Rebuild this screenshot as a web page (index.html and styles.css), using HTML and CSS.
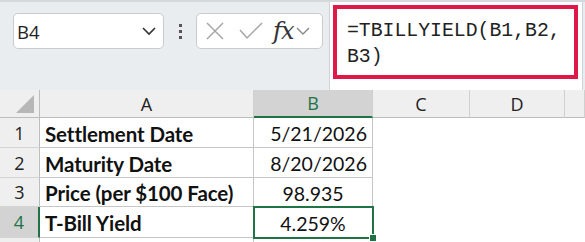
FILE: index.html
```html
<!DOCTYPE html>
<html lang="en">
<head>
  <meta charset="UTF-8" />
  <title>TBILLYIELD</title>
  <link rel="stylesheet" href="styles.css">
</head>
<body>
  <div class="toolbar">
    <div class="name-box">
      <span class="name-text">B4</span>
      <svg class="chev" width="16" height="10" viewBox="0 0 16 10"><path d="M2 2 L8 8 L14 2" fill="none" stroke="#333" stroke-width="1.6"/></svg>
    </div>
    <div class="dots"><span></span><span></span><span></span></div>
    <div class="fx-box">
      <svg width="20" height="20" viewBox="0 0 20 20"><path d="M2 2 L18 18 M18 2 L2 18" stroke="#a6a6a6" stroke-width="1.5" fill="none"/></svg>
      <svg width="26" height="20" viewBox="0 0 26 20"><path d="M2 9 L9 17 L24 2" stroke="#a6a6a6" stroke-width="1.5" fill="none"/></svg>
      <span class="fx">fx</span>
      <svg width="14" height="10" viewBox="0 0 14 10"><path d="M1 2 L7 8 L13 2" fill="none" stroke="#888" stroke-width="1.4"/></svg>
    </div>
    <div class="formula-panel">
      <div class="formula">=TBILLYIELD(B1,B2,<br>B3)</div>
    </div>
  </div>

  <div class="sheet">
    <div class="hdr corner"><span class="tri"></span></div>
    <div class="hdr">A</div>
    <div class="hdr sel">B</div>
    <div class="hdr">C</div>
    <div class="hdr">D</div>
    <div class="hdr"></div>

    <div class="rn">1</div>
    <div class="cell label">Settlement Date</div>
    <div class="cell right">5/21/2026</div>
    <div class="blank"></div><div class="blank"></div><div class="blank"></div>

    <div class="rn">2</div>
    <div class="cell label">Maturity Date</div>
    <div class="cell right">8/20/2026</div>
    <div class="blank"></div><div class="blank"></div><div class="blank"></div>

    <div class="rn">3</div>
    <div class="cell label">Price (per $100 Face)</div>
    <div class="cell center">98.935</div>
    <div class="blank"></div><div class="blank"></div><div class="blank"></div>

    <div class="rn sel">4</div>
    <div class="cell label">T-Bill Yield</div>
    <div class="cell center active">4.259%<span class="handle"></span></div>
    <div class="blank"></div><div class="blank"></div><div class="blank"></div>

    <div class="rn"></div>
    <div class="cell"></div>
    <div class="cell"></div>
    <div class="blank"></div><div class="blank"></div><div class="blank"></div>
  </div>
</body>
</html>
```

FILE: styles.css
```css
* {
  box-sizing: border-box;
}
body {
  margin: 0;
  width: 585px;
  height: 242px;
  overflow: hidden;
  background: #fff;
  font-family: 'Open Sans', sans-serif;
}

/* formula bar */
.toolbar {
  height: 90px;
  display: flex;
  align-items: flex-start;
  background: #e9edf0;
  border-top: 2px solid #d6d9dc;
}
.name-box {
  margin: 11px 0 0 13px;
  width: 151px;
  height: 36px;
  background: #fff;
  border: 1px solid #c9cccf;
  border-radius: 5px;
  display: flex;
  align-items: center;
  justify-content: space-between;
  padding: 0 6px 0 3px;
}
.name-text {
  font-size: 18.5px;
  color: #222;
}
.dots {
  width: 32px;
  height: 36px;
  margin-top: 11px;
  display: flex;
  flex-direction: column;
  align-items: center;
  justify-content: center;
  gap: 3px;
}
.dots span {
  width: 3px;
  height: 3px;
  background: #555;
}
.fx-box {
  margin-top: 11px;
  width: 127px;
  height: 36px;
  background: #fff;
  border: 1px solid #c9cccf;
  border-radius: 5px;
  display: flex;
  align-items: center;
  gap: 9px;
  padding-left: 8px;
}
.fx-box svg:nth-child(2) { margin-left: 4px; }
.fx {
  font-family: 'DejaVu Serif', serif;
  font-style: italic;
  font-size: 24px;
  color: #333;
  margin-left: 0;
  margin-right: -6px;
  letter-spacing: -1px;
}
.formula-panel {
  margin-left: 6px;
  width: 254px;
  height: 88px;
  background: #fff;
  border-left: 1px solid #d0d3d6;
  border-right: 1px solid #d0d3d6;
  padding: 3px 0 0 3px;
}
.formula {
  width: 245px;
  height: 74px;
  border: 4px solid #e0184a;
  padding: 9px 0 0 10px;
  font-family: 'Liberation Mono', monospace;
  font-size: 19.8px;
  line-height: 26px;
  color: #222;
}

/* grid */
.sheet {
  display: grid;
  grid-template-columns: 40px 214px 119px 97px 95px 20px;
  grid-template-rows: 28px 30px 30px 29px 31px 30px;
}
.hdr {
  background: #efefef;
  border-right: 1px solid #d0d0d0;
  border-bottom: 1px solid #bdbdbd;
  display: flex;
  align-items: center;
  justify-content: center;
  font-size: 18px;
  color: #222;
  font-family: 'Open Sans', sans-serif;
}
.hdr.sel {
  background: #d3d3d3;
  border-bottom: 2px solid #217346;
  color: #217346;
}
.corner {
  position: relative;
  border-right-color: #bdbdbd;
}
.tri {
  position: absolute;
  right: 5px;
  bottom: 4px;
  width: 0;
  height: 0;
  border-left: 18px solid transparent;
  border-bottom: 18px solid #b7b7b7;
}
.rn {
  background: #efefef;
  border-right: 1px solid #bdbdbd;
  border-bottom: 1px solid #d4d4d4;
  display: flex;
  align-items: center;
  justify-content: center;
  font-size: 18px;
  color: #222;
}
.rn.sel {
  background: #d3d3d3;
  border-right: 2px solid #217346;
  color: #217346;
}
.cell {
  border-right: 1px solid #c6c6c6;
  border-bottom: 1px solid #c6c6c6;
  display: flex;
  align-items: center;
  padding: 2px 5px 0;
  font-family: 'Lato', sans-serif;
  font-size: 19.5px;
  color: #111;
}
.label {
  font-weight: bold;
  font-size: 20.5px;
  letter-spacing: -0.1px;
}
.right { justify-content: flex-end; }
.center { justify-content: center; }
.active {
  position: relative;
  outline: 2px solid #217346;
  outline-offset: -1px;
}
.handle {
  position: absolute;
  right: -5px;
  bottom: -5px;
  width: 8px;
  height: 8px;
  background: #217346;
  border: 1px solid #fff;
}
.blank {
  background: #fff;
}
```
